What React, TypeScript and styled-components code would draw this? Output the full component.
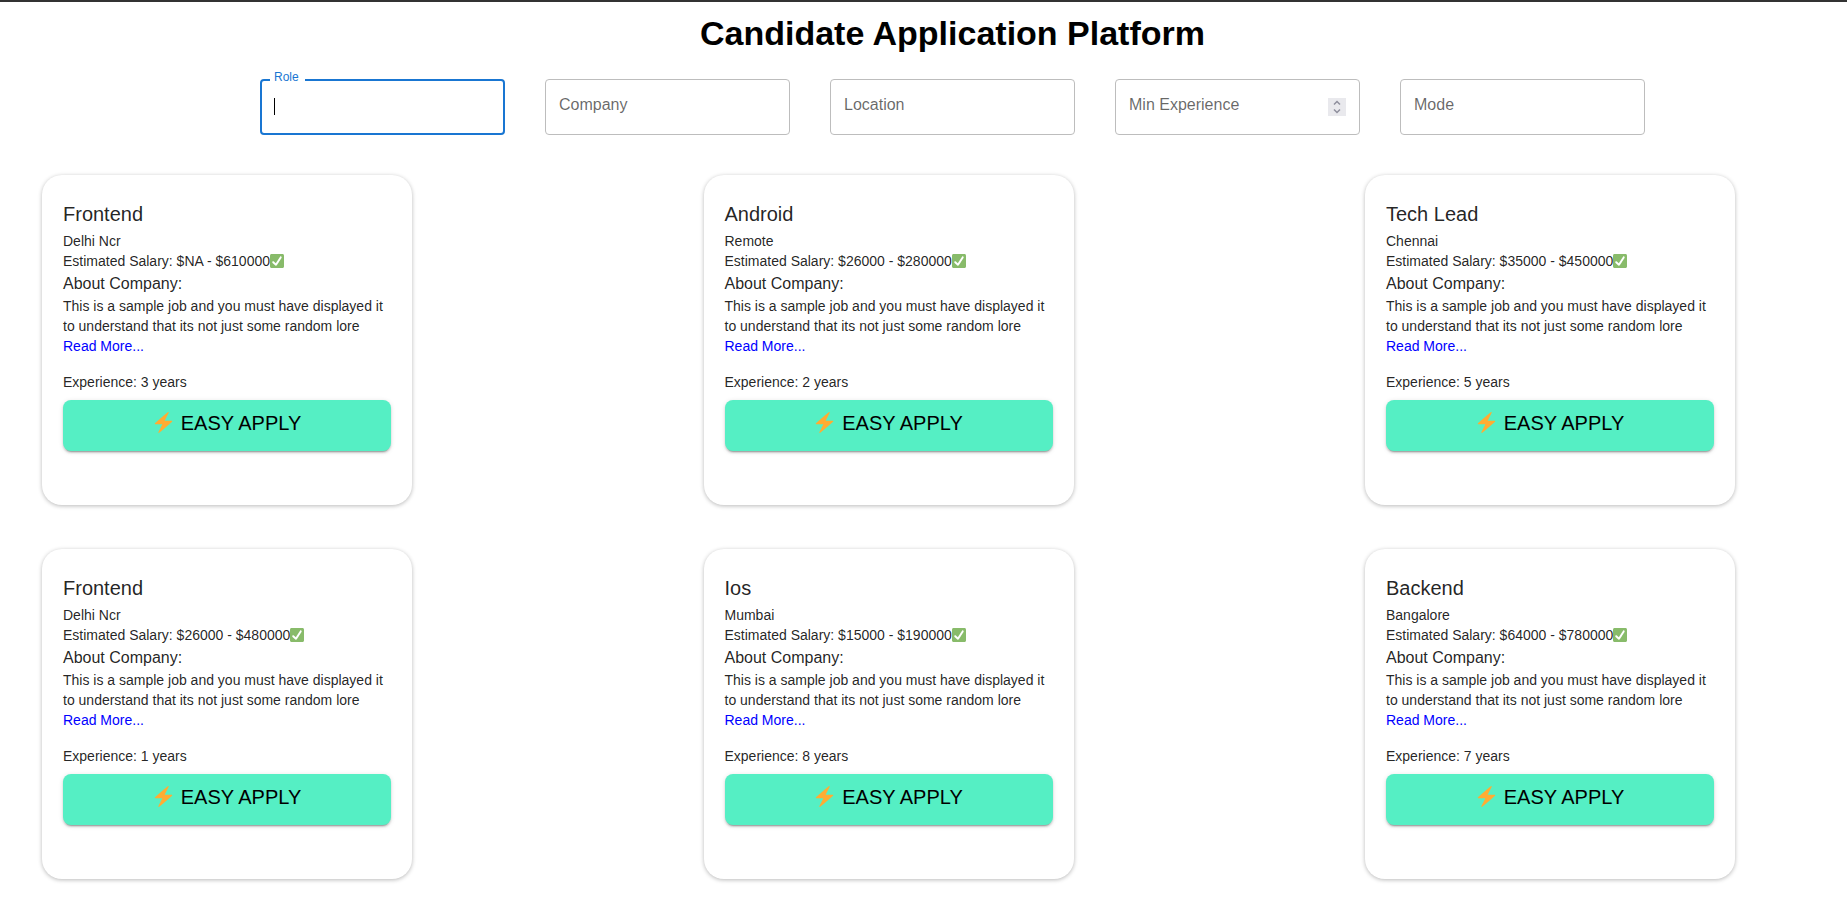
import React from 'react';
import styled, { createGlobalStyle } from 'styled-components';

const GlobalStyle = createGlobalStyle`
  *, *::before, *::after { box-sizing: border-box; }
  body {
    margin: 0;
    background: #fff;
    color: rgba(0, 0, 0, 0.87);
    font-family: 'Liberation Sans', Arial, Helvetica, sans-serif;
    font-size: 14px;
    line-height: 20px;
  }
`;

const Page = styled.div`
  border-top: 2px solid #333;
`;

const Header = styled.header`
  display: flex;
  flex-direction: column;
  align-items: center;
  gap: 26px;
  padding: 11px 0 0 58px;
`;

const Title = styled.h1`
  margin: 0;
  color: #000;
  font-size: 34px;
  line-height: 40px;
`;

const Filters = styled.form`
  display: flex;
  flex-wrap: wrap;
  justify-content: center;
  gap: 40px;
`;

const Field = styled.div`
  position: relative;
  display: flex;
  width: 245px;
`;

const FieldInput = styled.input<{ $active?: boolean }>`
  width: 100%;
  height: 56px;
  padding: 0 14px;
  border: ${p => (p.$active ? '2px solid #1976d2' : '1px solid #bdbdbd')};
  border-radius: 4px;
  outline: none;
  background: transparent;
  font: inherit;
  font-size: 16px;
  appearance: textfield;
  &::-webkit-inner-spin-button { appearance: none; }
`;

const FieldLabel = styled.label<{ $active?: boolean }>`
  position: absolute;
  left: ${p => (p.$active ? 10 : 14)}px;
  top: ${p => (p.$active ? -10 : 14)}px;
  padding: ${p => (p.$active ? '0 6px 0 4px' : '0')};
  background: #fff;
  color: ${p => (p.$active ? '#1976d2' : 'rgba(0, 0, 0, 0.6)')};
  font-size: ${p => (p.$active ? 12 : 16)}px;
  line-height: ${p => (p.$active ? 16 : 24)}px;
`;

const Caret = styled.span`
  position: absolute;
  left: 14px;
  top: 19px;
  width: 1px;
  height: 17px;
  background: #000;
`;

const Stepper = styled.svg`
  position: absolute;
  right: 14px;
  top: 19px;
  width: 18px;
  height: 18px;
`;

const Jobs = styled.main`
  display: grid;
  grid-template-columns: repeat(3, 370px);
  justify-content: space-between;
  row-gap: 44px;
  padding: 40px 112px 38px 42px;
`;

const Card = styled.article`
  display: flex;
  flex-direction: column;
  padding: 22px 21px 54px;
  border-radius: 20px;
  background: #fff;
  box-shadow: 0 1px 4px rgba(0, 0, 0, 0.28);
`;

const Role = styled.h2`
  margin: 0;
  font-size: 20px;
  font-weight: 400;
  line-height: 34px;
`;

const Detail = styled.p`
  display: flex;
  align-items: center;
  margin: 0;
`;

const AboutTitle = styled.h3`
  margin: 0;
  font-size: 16px;
  font-weight: 400;
  line-height: 25px;
`;

const Text = styled.p`
  margin: 0;
`;

const ReadMore = styled.a`
  align-self: flex-start;
  margin-bottom: 16px;
  color: #00f;
  text-decoration: none;
`;

const ApplyButton = styled.button`
  display: flex;
  justify-content: center;
  align-items: center;
  gap: 7px;
  height: 51px;
  margin-top: 8px;
  padding: 0 16px 6px;
  border: 0;
  border-radius: 8px;
  background: #55efc4;
  color: #000;
  font: inherit;
  font-size: 20px;
  cursor: pointer;
  box-shadow: 0 3px 1px -2px rgba(0, 0, 0, 0.2), 0 2px 2px 0 rgba(0, 0, 0, 0.14),
    0 1px 5px 0 rgba(0, 0, 0, 0.12);
`;

const CheckMark = () => (
  <svg width="14" height="14" viewBox="0 0 36 36" opacity="0.87" aria-hidden="true">
    <path fill="#77B255" d="M36 32c0 2.209-1.791 4-4 4H4c-2.209 0-4-1.791-4-4V4c0-2.209 1.791-4 4-4h28c2.209 0 4 1.791 4 4v28z" />
    <path fill="#FFF" d="M29.28 6.362c-1.156-.751-2.704-.422-3.458.736L14.936 23.877l-5.029-4.65c-1.014-.938-2.596-.875-3.533.138-.937 1.014-.875 2.596.139 3.533l7.209 6.666c.48.445 1.09.665 1.696.665.673 0 1.534-.282 2.099-1.139.332-.506 12.209-18.81 12.209-18.81.752-1.157.423-2.702-.736-3.453" />
  </svg>
);

const Bolt = () => (
  <svg width="21" height="21" viewBox="0 0 36 36" aria-hidden="true">
    <path fill="#FFAC33" d="M32.938 15.651C32.792 15.26 32.418 15 32 15H19.925L26.89 1.458c.219-.426.106-.947-.271-1.243C26.437.071 26.218 0 26 0c-.233 0-.466.082-.653.243L18 6.588 3.347 19.243c-.316.273-.43.714-.284 1.105S3.582 21 4 21h12.075L9.11 34.542c-.219.426-.106.947.271 1.243.182.144.401.215.619.215.233 0 .466-.082.653-.243L18 29.412l14.653-12.655c.317-.273.43-.714.285-1.106z" />
  </svg>
);

const fields = [
  { id: 'role', label: 'Role', type: 'text', active: true },
  { id: 'company', label: 'Company', type: 'text' },
  { id: 'location', label: 'Location', type: 'text' },
  { id: 'experience', label: 'Min Experience', type: 'number' },
  { id: 'mode', label: 'Mode', type: 'text' },
];

const jobs = [
  { role: 'Frontend', place: 'Delhi Ncr', salary: '$NA - $610000', years: 3 },
  { role: 'Android', place: 'Remote', salary: '$26000 - $280000', years: 2 },
  { role: 'Tech Lead', place: 'Chennai', salary: '$35000 - $450000', years: 5 },
  { role: 'Frontend', place: 'Delhi Ncr', salary: '$26000 - $480000', years: 1 },
  { role: 'Ios', place: 'Mumbai', salary: '$15000 - $190000', years: 8 },
  { role: 'Backend', place: 'Bangalore', salary: '$64000 - $780000', years: 7 },
];

export default function App() {
  return (
    <Page>
      <GlobalStyle />
      <Header>
        <Title>Candidate Application Platform</Title>
        <Filters>
          {fields.map(f => (
            <Field key={f.id}>
              <FieldInput id={f.id} type={f.type} $active={f.active} />
              <FieldLabel htmlFor={f.id} $active={f.active}>{f.label}</FieldLabel>
              {f.active && <Caret />}
              {f.type === 'number' && (
                <Stepper viewBox="0 0 18 18" aria-hidden="true">
                  <rect width="18" height="18" fill="#e9e9ed" />
                  <path d="M6 6.5 9 3.5l3 3M6 11.5l3 3 3-3" fill="none" stroke="#8f8f9d" strokeWidth="1.5" />
                </Stepper>
              )}
            </Field>
          ))}
        </Filters>
      </Header>
      <Jobs>
        {jobs.map((job, i) => (
          <Card key={i}>
            <Role>{job.role}</Role>
            <Detail>{job.place}</Detail>
            <Detail>Estimated Salary: {job.salary}<CheckMark /></Detail>
            <AboutTitle>About Company:</AboutTitle>
            <Text>This is a sample job and you must have displayed it to understand that its not just some random lore</Text>
            <ReadMore href="#">Read More...</ReadMore>
            <Text>Experience: {job.years} years</Text>
            <ApplyButton type="button"><Bolt />EASY APPLY</ApplyButton>
          </Card>
        ))}
      </Jobs>
    </Page>
  );
}
